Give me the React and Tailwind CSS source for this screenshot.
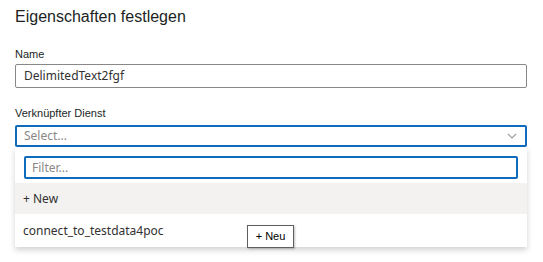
const Chevron = () => (
  <svg width="10" height="6" viewBox="0 0 10 6" className="text-[#a19f9d]">
    <path d="M1 1 L5 5 L9 1" fill="none" stroke="currentColor" strokeWidth="1.2" />
  </svg>
);

export default function App() {
  return (
    <div className="relative w-[543px] h-[262px] overflow-hidden bg-white px-[15px] pt-[7px] text-[#323130] font-['Noto_Sans','Open_Sans',sans-serif]">
      <h1 className="text-[16px] leading-[20px] text-[#201f1e] font-['Liberation_Sans',Arial,sans-serif]">
        Eigenschaften festlegen
      </h1>

      <label className="mt-[20px] block text-[11px] leading-[14px] text-[#201f1e] font-['Liberation_Sans',Arial,sans-serif]">
        Name
      </label>
      <div className="mt-[3px] flex h-[24px] w-[512px] items-center rounded-[2px] border border-[#8a8886] px-[8px] text-[12px]">
        DelimitedText2fgf
      </div>

      <label className="mt-[18px] block text-[11px] leading-[14px] text-[#201f1e] font-['Liberation_Sans',Arial,sans-serif]">
        Verknüpfter Dienst
      </label>
      <div className="mt-[5px] flex h-[22px] w-[512px] items-center justify-between rounded-[2px] border-2 border-[#0f6cbd] pl-[7px] pr-[8px] text-[12px] text-[#8a8886]">
        <span>Select...</span>
        <Chevron />
      </div>

      <div className="w-[512px] bg-white shadow-[0_3px_6px_rgba(0,0,0,0.18)]">
        <div className="px-[9px] pt-[9px] pb-[4px]">
          <div className="flex h-[23px] items-center rounded-[2px] border-2 border-[#0f6cbd] px-[6px] text-[12px] text-[#8a8886]">
            Filter...
          </div>
        </div>
        <div className="flex h-[31px] items-center bg-[#f3f2f1] px-[8px] text-[12px] text-[#323130]">
          + New
        </div>
        <div className="flex h-[33px] items-center px-[8px] text-[12px] text-[#323130]">
          connect_to_testdata4poc
        </div>
      </div>

      <div className="absolute left-[247px] top-[225px] flex h-[23px] w-[47px] items-center justify-center border border-[#5f5f5f] bg-white text-[11px] text-black shadow-[1px_1px_2px_rgba(0,0,0,0.25)] font-['Liberation_Sans',Arial,sans-serif]">
        + Neu
      </div>
    </div>
  );
}
